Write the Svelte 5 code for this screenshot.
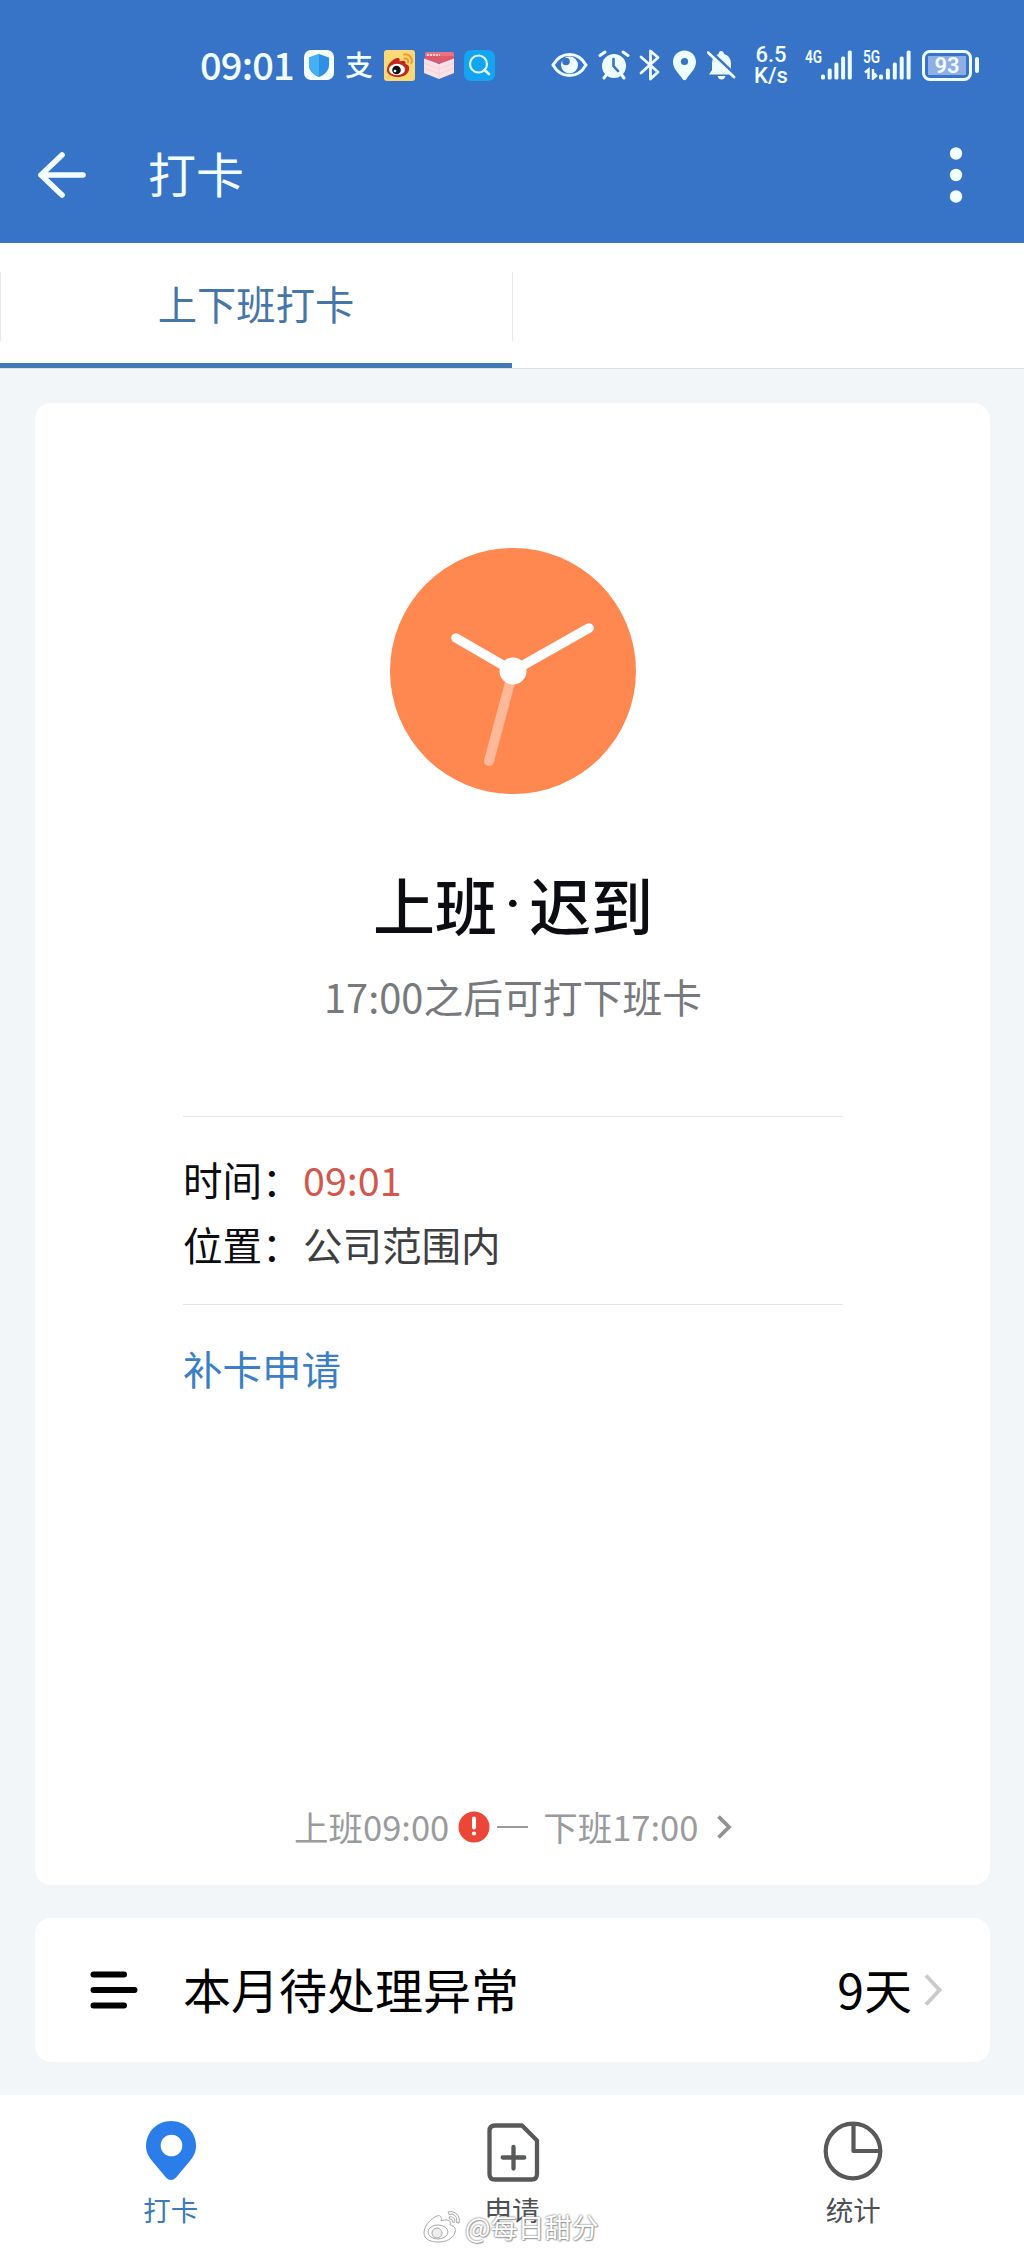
<script lang="ts">
  const tabs = ["上下班打卡", ""];
  const signalBars = [5, 11, 17, 23, 29];

  let activeTab = 0;
  let activeNav = "punch";
</script>

<div class="screen">
  <header>
    <div class="status">
      <span class="time">09:01</span>
      <svg class="app" width="30" height="30" viewBox="0 0 30 30">
        <rect width="30" height="30" rx="7" fill="#f4fdff" />
        <path d="M15 4 L25 7.500 V15 C25 21 20 25 15 27 C10 25 5 21 5 15 V7.500 Z" fill="#2f8fe6" />
        <path d="M15 4 L5 7.500 V15 C5 21 10 25 15 27 Z" fill="#45b0f3" />
      </svg>
      <span class="alipay">支</span>
      <svg class="weibo" width="31" height="31" viewBox="0 0 31 31">
        <rect width="31" height="31" rx="3" fill="#fbd977" />
        <path d="M3 20 C3 14 9 9 13 8 C16 7.500 16 10 15.500 11.500 C19 10 22.500 10.500 21.500 14 C25 15 25.500 17 25 20 C24 25 18 27.500 12.500 27 C7 26.500 3 24 3 20 Z" fill="#c2281c" />
        <ellipse cx="13" cy="19.500" rx="8" ry="5.800" fill="#fff" />
        <circle cx="12.500" cy="20" r="4.300" fill="#111" />
        <circle cx="11" cy="21" r="1.300" fill="#fff" />
        <path d="M20 4.500 C25 3.500 29 8 27.500 13 M20.500 8.500 C23 8 25 10 24 12.500" fill="none" stroke="#f0992b" stroke-width="2" stroke-linecap="round" />
      </svg>
      <svg class="book" width="32" height="29" viewBox="0 0 32 29">
        <path d="M2 3 Q2 1 4 1 H29 Q31 1 31 3 V12 H2 Z" fill="#dc5a6b" />
        <path d="M2 3 Q2 1 4 1 H29 Q31 1 31 3 V5 H2 Z" fill="#e87480" />
        <path d="M4 4 H17" stroke="#fbd5da" stroke-width="2" stroke-dasharray="2 1" />
        <path d="M1 7.500 L16 13 L31 7.500 V22 L16 28 L1 22 Z" fill="#fbe1e7" />
        <path d="M1 12 L16 18 L31 12 M1 17 L16 23 L31 17 M16 13 V28" fill="none" stroke="#f5cfd8" stroke-width="1" />
      </svg>
      <svg class="search" width="31" height="31" viewBox="0 0 31 31">
        <rect width="31" height="31" rx="7" fill="#15a4f2" />
        <circle cx="14.500" cy="14" r="8.500" fill="none" stroke="#dffaff" stroke-width="2.200" />
        <path d="M20.500 20 L25 24" stroke="#dffaff" stroke-width="2.600" stroke-linecap="round" />
      </svg>

      <svg class="eye" width="37" height="26" viewBox="0 0 37 26">
        <path d="M2 13 C10 -1 27 -1 35 13 C27 27 10 27 2 13 Z" fill="none" stroke="#eefdff" stroke-width="3" />
        <circle cx="18.500" cy="13" r="8.500" fill="#eefdff" />
        <circle cx="15" cy="9.500" r="3.800" fill="#3774c7" />
      </svg>
      <svg class="alarm" width="32" height="30" viewBox="0 0 32 30">
        <circle cx="16" cy="16" r="12" fill="#eefdff" />
        <path d="M2 5.500 L7 2 M25 2 L30 5.500 M6 28 L9 24 M26 28 L23 24" stroke="#eefdff" stroke-width="3" stroke-linecap="round" />
        <path d="M15.500 9 V16 L20 21" fill="none" stroke="#3774c7" stroke-width="2.600" stroke-linecap="round" />
      </svg>
      <svg class="bluetooth" width="22" height="32" viewBox="0 0 22 32">
        <path d="M2 8 L19 23 L11.500 30 V2 L19 8.500 L2 24" fill="none" stroke="#eefdff" stroke-width="2.800" stroke-linejoin="round" stroke-linecap="round" />
      </svg>
      <svg class="place" width="25" height="31" viewBox="0 0 25 31">
        <path d="M12.500 0.500 C19 0.500 24 5.500 24 12 C24 19 17.500 24 14.500 29 Q12.500 31.500 10.500 29 C7.500 24 1 19 1 12 C1 5.500 6 0.500 12.500 0.500 Z" fill="#eefdff" />
        <circle cx="12.500" cy="11.500" r="3.600" fill="#3774c7" />
      </svg>
      <svg class="bell" width="29" height="31" viewBox="0 0 29 31">
        <path d="M14 1 Q16.500 1 17 4 C22 5.500 24 9 24 14 V20 L27 24.500 H2 L5 20 V14 C5 9 7 5.500 11.500 4 Q12 1 14 1 Z" fill="#eefdff" />
        <path d="M10.500 26 H18.500 Q17.500 29.500 14.500 29.500 Q11.500 29.500 10.500 26 Z" fill="#eefdff" />
        <path d="M2 0 L29 25.500" stroke="#3774c7" stroke-width="3" />
        <path d="M1 2.500 L27 27" stroke="#eefdff" stroke-width="2.800" stroke-linecap="round" />
      </svg>
      <div class="speed"><span>6.5</span><span>K/s</span></div>
      <div class="signal">
        <span class="network">4G</span>
        <svg width="32" height="30" viewBox="0 0 32 30">
          {#each signalBars as height, i}
            <rect x={i * 6.700} y={29.500 - height} width="4" {height} rx="1.500" fill="#eefdff" />
          {/each}
        </svg>
      </div>
      <div class="signal second">
        <span class="network">5G</span>
        <svg width="47" height="30" viewBox="0 0 47 30">
          <path d="M1 22.500 L4.500 19.500 V29 M9 19 V28.500 L13 25 M9 23 L12 25" fill="none" stroke="#eefdff" stroke-width="2.400" />
          {#each signalBars as height, i}
            <rect x={15 + i * 6.900} y={29.500 - height} width="4" {height} rx="1.500" fill="#eefdff" />
          {/each}
        </svg>
      </div>
      <div class="battery"><span>93</span></div>
      <i class="cap"></i>
    </div>

    <div class="titlebar">
      <button class="back" aria-label="返回">
        <svg width="50" height="48" viewBox="0 0 50 48">
          <path d="M25 4 L4 24 L25 44 M4 24 H46" fill="none" stroke="#f1fdff" stroke-width="5.600" stroke-linecap="round" stroke-linejoin="round" />
        </svg>
      </button>
      <h1>打卡</h1>
      <button class="more" aria-label="更多">
        <svg width="14" height="58" viewBox="0 0 14 58">
          <circle cx="7" cy="7.500" r="6.200" fill="#f1fdff" />
          <circle cx="7" cy="29" r="6.200" fill="#f1fdff" />
          <circle cx="7" cy="50.500" r="6.200" fill="#f1fdff" />
        </svg>
      </button>
    </div>
  </header>

  <div class="tabs">
    {#each tabs as tab, i}
      <div class="tab" class:active={i === activeTab}><span>{tab}</span></div>
    {/each}
  </div>

  <main>
    <section class="card punch">
      <svg class="clock" width="248" height="248" viewBox="0 0 248 248">
        <circle cx="124" cy="124" r="123" fill="#ff8750" />
        <path d="M123 128 L100 214" stroke="#ffb898" stroke-width="10" stroke-linecap="round" />
        <path d="M124 124 L67 91 M124 124 L200 81" stroke="#fff" stroke-width="9.500" stroke-linecap="round" />
        <circle cx="124" cy="124" r="13.500" fill="#fff" />
      </svg>
      <h2>上班<span class="dot">·</span>迟到</h2>
      <p class="hint">17:00之后可打下班卡</p>

      <dl>
        <div>
          <dt>时间：</dt>
          <dd class="late">09:01</dd>
        </div>
        <div>
          <dt>位置：</dt>
          <dd>公司范围内</dd>
        </div>
      </dl>
      <span class="apply">补卡申请</span>

      <div class="shift">
        <span>上班09:00</span>
        <svg class="warn" width="32" height="32" viewBox="0 0 32 32">
          <circle cx="16" cy="16" r="15.500" fill="#ec4639" />
          <path d="M16 7.500 V16.500" stroke="#fff" stroke-width="4" stroke-linecap="round" />
          <circle cx="16" cy="22.500" r="2.100" fill="#fff" />
        </svg>
        <i class="dash"></i>
        <span>下班17:00</span>
        <svg class="chevron" width="18" height="28" viewBox="0 0 18 28">
          <path d="M3.500 3.500 L14 14 L3.500 24.500" fill="none" stroke="#8f9193" stroke-width="3.800" />
        </svg>
      </div>
    </section>

    <section class="card month">
      <svg class="list" width="48" height="40" viewBox="0 0 48 40">
        <path d="M3.500 4.500 H34 M3.500 20 H44.500 M3.500 35.500 H34" stroke="#000" stroke-width="6" stroke-linecap="round" />
      </svg>
      <span class="label">本月待处理异常</span>
      <span class="days">9天</span>
      <svg width="20" height="34" viewBox="0 0 20 34">
        <path d="M3 2.500 L16.500 17 L3 31.500" fill="none" stroke="#cbcbcb" stroke-width="4" />
      </svg>
    </section>
  </main>

  <nav>
    <div class="item" class:active={activeNav === "punch"}>
      <svg width="62" height="62" viewBox="0 0 62 62">
        <path d="M31 1 C45 1 56 12 56 26 C56 33 53 37 49 42 L36 57.500 Q31 62.500 26 57.500 L13 42 C9 37 6 33 6 26 C6 12 17 1 31 1 Z" fill="#2b7de9" />
        <circle cx="31.500" cy="25.500" r="10.800" fill="#fff" />
      </svg>
      <span>打卡</span>
    </div>
    <div class="item" class:active={activeNav === "apply"}>
      <svg width="62" height="62" viewBox="0 0 62 62">
        <path d="M14 5.500 H41 L56 20.500 V54 Q56 59.500 50.500 59.500 H14 Q8.500 59.500 8.500 54 V11 Q8.500 5.500 14 5.500 Z" fill="none" stroke="#58595b" stroke-width="4.300" stroke-linejoin="round" />
        <path d="M32.500 27 V48.500 M21.700 37.500 H43.300" stroke="#58595b" stroke-width="4.300" stroke-linecap="round" />
      </svg>
      <span>申请</span>
    </div>
    <div class="item" class:active={activeNav === "stats"}>
      <svg width="62" height="62" viewBox="0 0 62 62">
        <circle cx="31" cy="31" r="27.300" fill="none" stroke="#58595b" stroke-width="4.200" />
        <path d="M31.500 4 V31 H58" fill="none" stroke="#58595b" stroke-width="4.200" stroke-linejoin="round" />
      </svg>
      <span>统计</span>
    </div>

    <div class="watermark">
      <svg width="39" height="34" viewBox="0 0 39 34">
        <g fill="#fff" stroke="#a9a9a9" stroke-width="1">
          <path d="M1 23 C1 15 9 8 14 6 C18 4.500 19 8 18 11 C23 9 29 9.500 27 15 C32 16 33 19 32 22 C30 29 23 32 15 32 C7 32 1 29 1 23 Z" />
          <ellipse cx="15" cy="22" rx="10" ry="7" />
          <circle cx="14" cy="23" r="5" fill="#eee" />
          <path d="M25 2 C32 0 38 6 36 13 L33.500 12.500 C35 7 31 3 26 4.500 Z" />
          <path d="M26 7 C30 6 33 9 31.500 12.500 L29.500 12 C30 10 28.500 8.500 26.500 9 Z" />
        </g>
      </svg>
      <span>@每日甜分</span>
    </div>
  </nav>
</div>

<style>
  :global(body) {
    background: #f3f6f8;
  }

  .screen {
    width: 1024px;
    height: 2253px;
    display: flex;
    flex-direction: column;
    overflow: hidden;
    background: #f3f6f8;
    font-family: "Noto Sans CJK SC", sans-serif;
    color: #0c0d12;
  }

  svg,
  span,
  i {
    display: block;
    flex: none;
  }

  h1,
  h2,
  p,
  dl,
  dd {
    margin: 0;
    font-weight: normal;
  }

  header {
    height: 243px;
    background: #3774c7;
    color: #f1fdff;
  }

  .status {
    height: 130px;
    padding-left: 200px;
    display: flex;
    align-items: center;
    white-space: nowrap;
  }

  .time {
    width: 104px;
    padding-bottom: 2px;
    font-size: 38px;
    font-weight: 500;
    line-height: 50px;
    letter-spacing: -0.8px;
  }

  .alipay {
    width: 30px;
    margin: 0 9px 0 11px;
    padding-bottom: 2px;
    font-size: 28px;
    line-height: 32px;
    font-weight: 500;
  }

  .book {
    margin: 0 9px 0 8px;
  }

  .eye {
    margin: 0 10px 0 56px;
  }

  .bluetooth {
    margin: 0 11px 0 9px;
  }

  .bell {
    margin-left: 10px;
  }

  .speed {
    width: 34px;
    margin: 0 17px 0 18px;
    font: 500 22px/21px Roboto, sans-serif;
    text-align: center;
  }

  .signal {
    width: 48px;
    height: 30px;
    margin-right: 10px;
    display: grid;
  }

  .signal > * {
    grid-area: 1 / 1;
  }

  .signal svg {
    justify-self: end;
  }

  .second {
    margin-right: 11px;
  }

  .network {
    font: 600 18px/14px Roboto, sans-serif;
    transform: scaleX(0.76);
    transform-origin: left;
  }

  .battery {
    box-sizing: border-box;
    width: 50px;
    height: 31px;
    padding: 3px;
    border: 3px solid #eefdff;
    border-radius: 8px;
  }

  .battery span {
    height: 19px;
    background: #8eaee6;
    font: 600 22px/20px Roboto, sans-serif;
    text-align: center;
  }

  .cap {
    width: 4px;
    height: 16px;
    margin-left: 3px;
    border-radius: 2px;
    background: #eefdff;
  }

  .titlebar {
    height: 90px;
    padding: 0 61px 0 37px;
    display: flex;
    align-items: center;
  }

  button {
    padding: 0;
    border: 0;
    background: none;
  }

  h1 {
    flex: 1;
    margin-left: 61px;
    font-size: 48px;
    line-height: 84px;
    padding-bottom: 6px;
  }

  .tabs {
    height: 125px;
    display: grid;
    grid-template-columns: 512px 512px;
    background: #fff;
    border-bottom: 1px solid #dcdfe1;
  }

  .tab {
    display: flex;
    flex-direction: column;
    align-items: center;
    justify-content: center;
    border-bottom: 5px solid transparent;
    background: linear-gradient(#e6e8ea, #e6e8ea) 0 29px / 1px 69px no-repeat;
    font-size: 39.300px;
    line-height: 50px;
  }

  .tab.active {
    border-color: #4079b8;
    color: #4676a9;
  }

  main {
    flex: 1;
    padding: 34px 34px 0 35px;
  }

  .card {
    box-sizing: border-box;
    border-radius: 16px;
    background: #fff;
  }

  .punch {
    height: 1482px;
    padding: 144px 147px 0 148px;
    display: flex;
    flex-direction: column;
  }

  .clock {
    align-self: center;
  }

  h2 {
    height: 80px;
    margin-top: 69px;
    display: flex;
    justify-content: center;
    font-size: 62px;
    font-weight: 500;
    line-height: 80px;
  }

  .dot {
    width: 32px;
    font-family: Roboto, sans-serif;
    font-size: 56px;
    font-weight: 500;
    text-align: center;
  }

  .hint {
    margin-top: 22px;
    font-size: 39.800px;
    line-height: 60px;
    text-align: center;
    color: #77797c;
  }

  dl {
    height: 189px;
    box-sizing: border-box;
    margin-top: 90px;
    padding-top: 29px;
    border-top: 1px solid #e4e4e4;
    border-bottom: 1px solid #e4e4e4;
    font-size: 39.500px;
    line-height: 65px;
  }

  dl div {
    display: flex;
  }

  dt {
    width: 120px;
    white-space: nowrap;
  }

  dd {
    color: #3e3f42;
  }

  .late {
    color: #d2574d;
  }

  .apply {
    margin-top: 30px;
    font-size: 39.500px;
    line-height: 65px;
    color: #3b7fc4;
  }

  .shift {
    height: 50px;
    margin-top: 402px;
    padding-left: 111px;
    display: flex;
    align-items: center;
    font-size: 34.500px;
    line-height: 50px;
    color: #999b9d;
  }

  .shift span {
    padding-bottom: 2px;
  }

  .warn {
    margin: 0 7px 0 9px;
  }

  .dash {
    width: 31px;
    height: 2px;
    margin-right: 15px;
    background: #999b9d;
  }

  .chevron {
    margin-left: 17px;
  }

  .month {
    height: 144px;
    margin-top: 33px;
    padding: 0 47px 0 55px;
    display: flex;
    align-items: center;
    font-size: 48px;
    line-height: 70px;
    color: #000;
  }

  .label {
    flex: 1;
    margin-left: 45px;
    padding-bottom: 4px;
  }

  .days {
    margin-right: 11px;
    padding-bottom: 4px;
  }

  nav {
    height: 158px;
    display: grid;
    grid-template-columns: repeat(3, 1fr);
    position: relative;
    background: #fff;
  }

  .item {
    display: flex;
    flex-direction: column;
    align-items: center;
    padding-top: 25px;
    color: #4e5053;
  }

  .item span {
    margin-top: 7px;
    font-size: 27.500px;
    line-height: 40px;
  }

  .item.active {
    color: #3b7cb8;
  }

  .watermark {
    position: absolute;
    left: 423px;
    top: 115px;
    display: flex;
    align-items: center;
    gap: 3px;
    color: #fff;
    font-size: 27px;
    line-height: 34px;
    text-shadow: 0 0 2px #888, 0 0 2px #999, 1px 1px 1px #aaa;
  }
</style>
